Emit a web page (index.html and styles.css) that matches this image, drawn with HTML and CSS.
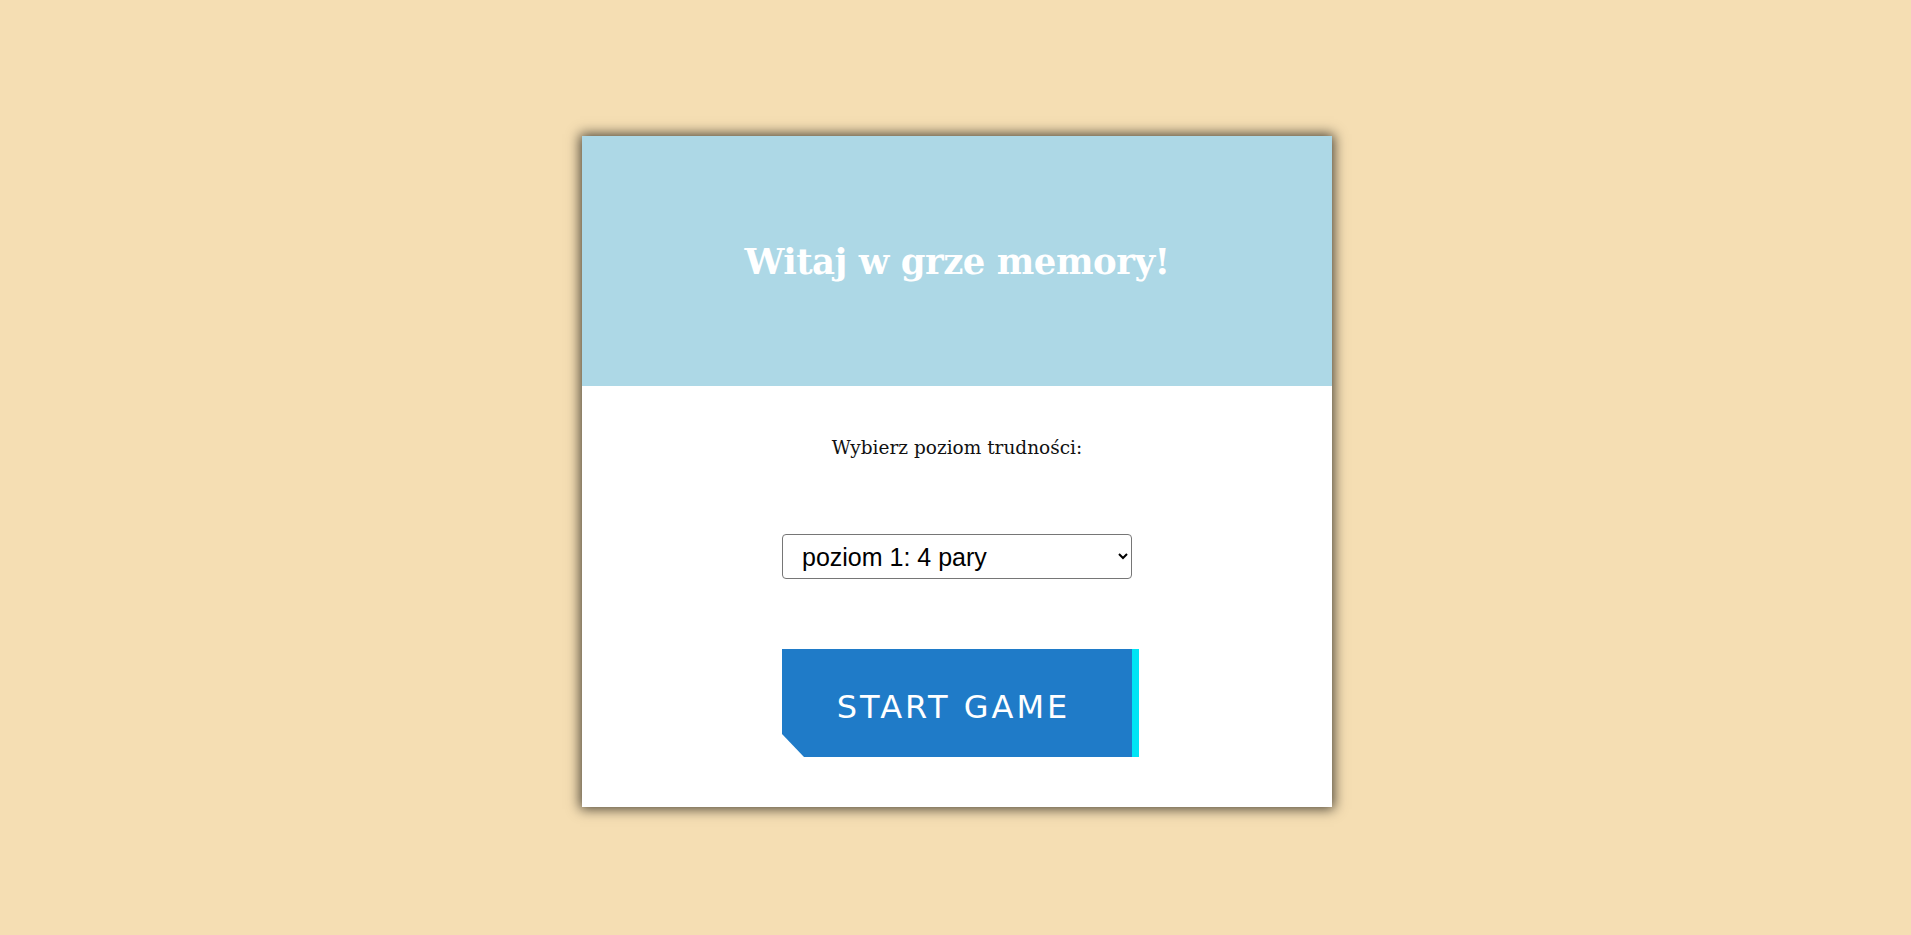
FILE: index.html
```html
<!DOCTYPE html>
<html lang="pl">
<head>
<meta charset="utf-8">
<title>Memory</title>
<link rel="stylesheet" href="styles.css">
</head>
<body>
<main class="card">
  <header class="card-header">
    <h1 class="title">Witaj w grze memory!</h1>
  </header>
  <section class="card-body">
    <p class="label">Wybierz poziom trudności:</p>
    <select class="level">
      <option>poziom 1: 4 pary</option>
      <option>poziom 2: 8 par</option>
      <option>poziom 3: 12 par</option>
    </select>
    <button class="start">START GAME</button>
  </section>
</main>
</body>
</html>
```
FILE: styles.css
```css
html, body {
  margin: 0;
  padding: 0;
}
body {
  background: #f5deb3;
  min-height: 935px;
  display: flex;
  justify-content: center;
  align-items: flex-start;
  padding-top: 136px;
  box-sizing: border-box;
}
.card {
  width: 750px;
  margin-left: 3px;
  background: #fff;
  box-shadow: 0 0 12px 2px rgba(0, 0, 0, 0.7);
  display: flex;
  flex-direction: column;
}
.card-header {
  height: 250px;
  background: #add8e6;
  display: flex;
  align-items: center;
  justify-content: center;
}
.title {
  margin: 0;
  color: #fff;
  font-family: "DejaVu Serif", serif;
  font-weight: bold;
  font-size: 35.5px;
  letter-spacing: -0.5px;
}
.card-body {
  display: flex;
  flex-direction: column;
  align-items: center;
  padding: 51px 0 50px;
}
.label {
  margin: 0;
  font-family: "DejaVu Serif", serif;
  font-size: 18.5px;
  color: #111;
}
.level {
  margin-top: 76px;
  width: 350px;
  height: 45px;
  font-family: "Liberation Sans", Arial, sans-serif;
  font-size: 25px;
  padding: 0 0 0 15px;
  border: 1px solid #767676;
  border-radius: 4px;
  background: #fff;
  color: #000;
}
.start {
  margin-top: 70px;
  margin-left: 7px;
  width: 357px;
  height: 108px;
  border: none;
  border-right: 7px solid #00e5f5;
  background: #1f7bc8;
  color: #fff;
  font-family: "Comic Sans MS", "DejaVu Sans", sans-serif;
  font-size: 32px;
  letter-spacing: 3px;
  clip-path: polygon(0 0, 100% 0, 100% 100%, 22px 100%, 0 calc(100% - 23px));
  padding: 8px 7px 0 0;
  box-sizing: border-box;
}
```
